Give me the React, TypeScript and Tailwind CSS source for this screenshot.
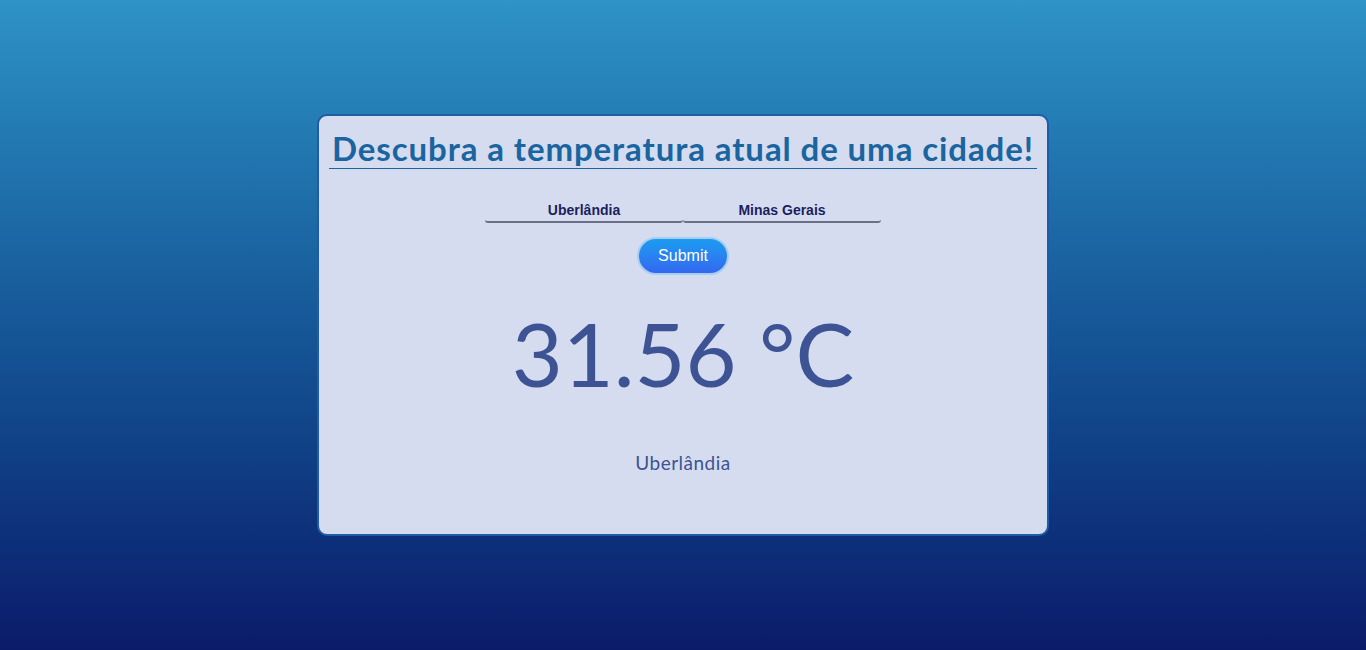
export default function App() {
  return (
    <div className="flex h-[650px] w-full items-start justify-center bg-gradient-to-b from-[#2e93c6] to-[#0c1a6a] pt-[114px] font-['Lato','Noto_Sans',sans-serif]">
      <div className="flex h-[422px] w-[732px] flex-col items-center rounded-[10px] border-2 border-[#1d5ca6] bg-[#d6dcef] px-[10px] pt-[13px]">
        <h1 className="w-full whitespace-nowrap border-b border-[#1a65a0] text-center text-[33px] font-bold leading-[39px] tracking-[0.9px] text-[#1a65a0]">
          Descubra a temperatura atual de uma cidade!
        </h1>
        <form className="mt-[30px] flex flex-col items-center font-['Liberation_Sans',Arial,sans-serif]">
          <div className="flex">
            <input
              readOnly
              value="Uberlândia"
              className="h-[24px] w-[198px] rounded-b-[3px] border-b-2 border-[#6b6f88] bg-transparent text-center text-[14px] font-bold text-[#1b1f5e] outline-none"
            />
            <input
              readOnly
              value="Minas Gerais"
              className="h-[24px] w-[198px] rounded-b-[3px] border-b-2 border-[#6b6f88] bg-transparent text-center text-[14px] font-bold text-[#1b1f5e] outline-none"
            />
          </div>
          <button
            type="button"
            className="mt-[14px] h-[38px] w-[92px] rounded-full border-2 border-[#a6cdf2] bg-gradient-to-b from-[#1a9cf0] to-[#3367f0] text-[16px] text-white"
          >
            Submit
          </button>
        </form>
        <p className="mt-[23px] text-[88px] leading-[110px] text-[#3d5394]">31.56 °C</p>
        <p className="mt-[41px] text-[19px] tracking-[0.5px] text-[#3d5394]">Uberlândia</p>
      </div>
    </div>
  );
}
